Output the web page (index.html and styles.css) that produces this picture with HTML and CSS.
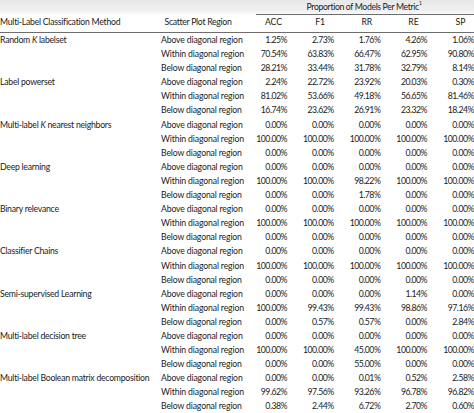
FILE: index.html
```html
<!DOCTYPE html>
<html lang="en">
<head>
<meta charset="utf-8">
<title>Proportion of Models Per Metric</title>
<link rel="stylesheet" href="styles.css">
</head>
<body>
<div class="table">
  <div class="row head1">
    <div class="span-metrics"><span>Proportion of Models Per Metric<sup>1</sup></span></div>
  </div>
  <div class="row head2">
    <div class="method">Multi-Label Classification Method</div>
    <div class="region center">Scatter Plot Region</div>
    <div class="num"><span class="hl">ACC</span></div>
    <div class="num"><span class="hl">F1</span></div>
    <div class="num"><span class="hl">RR</span></div>
    <div class="num"><span class="hl">RE</span></div>
    <div class="num last"><span class="hl">SP</span></div>
  </div>

  <div class="row"><div class="method">Random <i>K</i> labelset</div><div class="region">Above diagonal region</div><div class="num">1.25%</div><div class="num">2.73%</div><div class="num">1.76%</div><div class="num">4.26%</div><div class="num last">1.06%</div></div>
  <div class="row"><div class="method"></div><div class="region">Within diagonal region</div><div class="num">70.54%</div><div class="num">63.83%</div><div class="num">66.47%</div><div class="num">62.95%</div><div class="num last">90.80%</div></div>
  <div class="row"><div class="method"></div><div class="region">Below diagonal region</div><div class="num">28.21%</div><div class="num">33.44%</div><div class="num">31.78%</div><div class="num">32.79%</div><div class="num last">8.14%</div></div>

  <div class="row"><div class="method">Label powerset</div><div class="region">Above diagonal region</div><div class="num">2.24%</div><div class="num">22.72%</div><div class="num">23.92%</div><div class="num">20.03%</div><div class="num last">0.30%</div></div>
  <div class="row"><div class="method"></div><div class="region">Within diagonal region</div><div class="num">81.02%</div><div class="num">53.66%</div><div class="num">49.18%</div><div class="num">56.65%</div><div class="num last">81.46%</div></div>
  <div class="row"><div class="method"></div><div class="region">Below diagonal region</div><div class="num">16.74%</div><div class="num">23.62%</div><div class="num">26.91%</div><div class="num">23.32%</div><div class="num last">18.24%</div></div>

  <div class="row"><div class="method">Multi-label <i>K</i> nearest neighbors</div><div class="region">Above diagonal region</div><div class="num">0.00%</div><div class="num">0.00%</div><div class="num">0.00%</div><div class="num">0.00%</div><div class="num last">0.00%</div></div>
  <div class="row"><div class="method"></div><div class="region">Within diagonal region</div><div class="num">100.00%</div><div class="num">100.00%</div><div class="num">100.00%</div><div class="num">100.00%</div><div class="num last">100.00%</div></div>
  <div class="row"><div class="method"></div><div class="region">Below diagonal region</div><div class="num">0.00%</div><div class="num">0.00%</div><div class="num">0.00%</div><div class="num">0.00%</div><div class="num last">0.00%</div></div>

  <div class="row"><div class="method">Deep learning</div><div class="region">Above diagonal region</div><div class="num">0.00%</div><div class="num">0.00%</div><div class="num">0.00%</div><div class="num">0.00%</div><div class="num last">0.00%</div></div>
  <div class="row"><div class="method"></div><div class="region">Within diagonal region</div><div class="num">100.00%</div><div class="num">100.00%</div><div class="num">98.22%</div><div class="num">100.00%</div><div class="num last">100.00%</div></div>
  <div class="row"><div class="method"></div><div class="region">Below diagonal region</div><div class="num">0.00%</div><div class="num">0.00%</div><div class="num">1.78%</div><div class="num">0.00%</div><div class="num last">0.00%</div></div>

  <div class="row"><div class="method">Binary relevance</div><div class="region">Above diagonal region</div><div class="num">0.00%</div><div class="num">0.00%</div><div class="num">0.00%</div><div class="num">0.00%</div><div class="num last">0.00%</div></div>
  <div class="row"><div class="method"></div><div class="region">Within diagonal region</div><div class="num">100.00%</div><div class="num">100.00%</div><div class="num">100.00%</div><div class="num">100.00%</div><div class="num last">100.00%</div></div>
  <div class="row"><div class="method"></div><div class="region">Below diagonal region</div><div class="num">0.00%</div><div class="num">0.00%</div><div class="num">0.00%</div><div class="num">0.00%</div><div class="num last">0.00%</div></div>

  <div class="row"><div class="method">Classifier Chains</div><div class="region">Above diagonal region</div><div class="num">0.00%</div><div class="num">0.00%</div><div class="num">0.00%</div><div class="num">0.00%</div><div class="num last">0.00%</div></div>
  <div class="row"><div class="method"></div><div class="region">Within diagonal region</div><div class="num">100.00%</div><div class="num">100.00%</div><div class="num">100.00%</div><div class="num">100.00%</div><div class="num last">100.00%</div></div>
  <div class="row"><div class="method"></div><div class="region">Below diagonal region</div><div class="num">0.00%</div><div class="num">0.00%</div><div class="num">0.00%</div><div class="num">0.00%</div><div class="num last">0.00%</div></div>

  <div class="row"><div class="method">Semi-supervised Learning</div><div class="region">Above diagonal region</div><div class="num">0.00%</div><div class="num">0.00%</div><div class="num">0.00%</div><div class="num">1.14%</div><div class="num last">0.00%</div></div>
  <div class="row"><div class="method"></div><div class="region">Within diagonal region</div><div class="num">100.00%</div><div class="num">99.43%</div><div class="num">99.43%</div><div class="num">98.86%</div><div class="num last">97.16%</div></div>
  <div class="row"><div class="method"></div><div class="region">Below diagonal region</div><div class="num">0.00%</div><div class="num">0.57%</div><div class="num">0.57%</div><div class="num">0.00%</div><div class="num last">2.84%</div></div>

  <div class="row"><div class="method">Multi-label decision tree</div><div class="region">Above diagonal region</div><div class="num">0.00%</div><div class="num">0.00%</div><div class="num">0.00%</div><div class="num">0.00%</div><div class="num last">0.00%</div></div>
  <div class="row"><div class="method"></div><div class="region">Within diagonal region</div><div class="num">100.00%</div><div class="num">100.00%</div><div class="num">45.00%</div><div class="num">100.00%</div><div class="num last">100.00%</div></div>
  <div class="row"><div class="method"></div><div class="region">Below diagonal region</div><div class="num">0.00%</div><div class="num">0.00%</div><div class="num">55.00%</div><div class="num">0.00%</div><div class="num last">0.00%</div></div>

  <div class="row"><div class="method">Multi-label Boolean matrix decomposition</div><div class="region">Above diagonal region</div><div class="num">0.00%</div><div class="num">0.00%</div><div class="num">0.01%</div><div class="num">0.52%</div><div class="num last">2.58%</div></div>
  <div class="row"><div class="method"></div><div class="region">Within diagonal region</div><div class="num">99.62%</div><div class="num">97.56%</div><div class="num">93.26%</div><div class="num">96.78%</div><div class="num last">96.82%</div></div>
  <div class="row"><div class="method"></div><div class="region">Below diagonal region</div><div class="num">0.38%</div><div class="num">2.44%</div><div class="num">6.72%</div><div class="num">2.70%</div><div class="num last">0.60%</div></div>
</div>
</body>
</html>
```

FILE: styles.css
```css
html, body {
  margin: 0;
  padding: 0;
  overflow: hidden;
}
body {
  width: 474px;
  height: 413px;
  background: linear-gradient(#e8e8e8 0, #f1f1f1 11px, #ffffff 16px);
  color: #1a1a1a;
  font-family: "Lato", "Open Sans", sans-serif;
  font-size: 8.7px;
  letter-spacing: -0.15px;
}
.table {
  display: flex;
  flex-direction: column;
}
.row {
  display: grid;
  grid-template-columns: 158px 80px 59px 46.7px 46.7px 46.7px 36.9px;
  height: 14.1px;
  line-height: 14.1px;
  white-space: nowrap;
}
.head1 {
  height: 15px;
  line-height: 13px;
}
.span-metrics {
  grid-column: 3 / span 5;
  margin-left: 18px;
  border-bottom: 1px solid #6e6e6e;
  text-align: center;
  padding-right: 2px;
  letter-spacing: -0.35px;
}
.span-metrics sup {
  font-size: 5px;
  vertical-align: top;
  line-height: 7px;
  margin-left: 0;
}
.head2 {
  height: 18px;
  line-height: 14px;
}
.head2 > div {
  border-bottom: 1px solid #6e6e6e;
}
.method {
  padding-left: 0;
  letter-spacing: -0.25px;
}
.method i {
  font-style: italic;
}
.region {
  padding-left: 3px;
}
.region.center {
  padding-left: 0;
  text-align: center;
  letter-spacing: -0.3px;
}
.num {
  text-align: right;
  padding-right: 10px;
  letter-spacing: -0.5px;
}
.num.last {
  padding-right: 0;
}
.hl {
  display: inline-block;
  width: 27px;
  text-align: center;
  letter-spacing: 0;
}
```
